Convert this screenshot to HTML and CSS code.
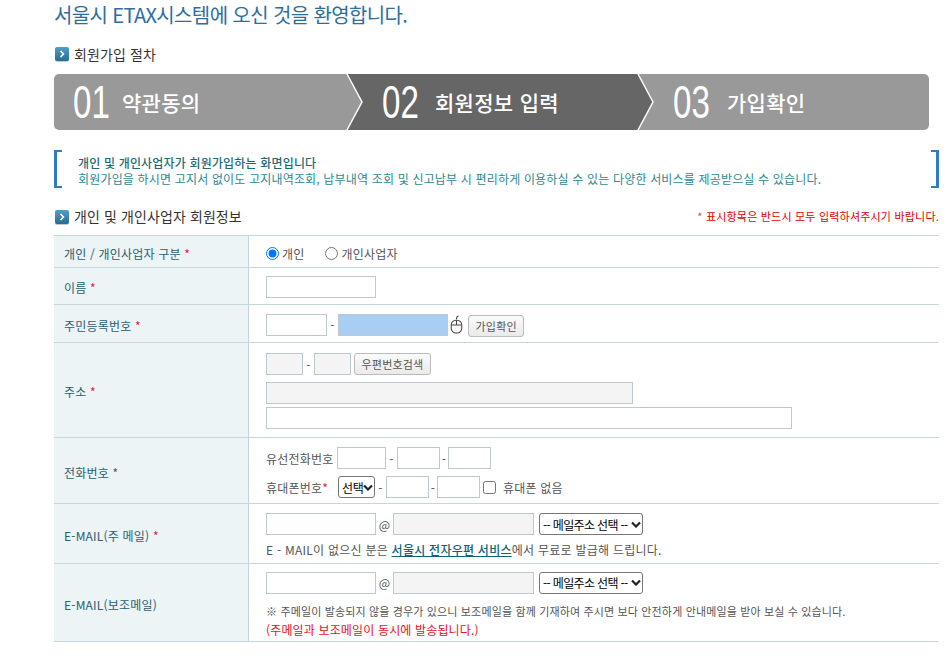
FILE: index.html
```html
<!DOCTYPE html>
<html lang="ko">
<head>
    <meta charset="UTF-8">
    <title>회원가입</title>
    <link rel="stylesheet" href="styles.css">
</head>
<body>
    <h1 class="page-title">서울시 ETAX시스템에 오신 것을 환영합니다.</h1>

    <h2 class="sub-title sub-title-steps">
        <svg class="bullet" viewBox="0 0 14 15"><defs><linearGradient id="bulletA" x1="0" y1="0" x2="0" y2="1"><stop offset="0" stop-color="#4f9fc9"/><stop offset="1" stop-color="#276c94"/></linearGradient></defs><rect y="1" width="14" height="14" rx="2" fill="#c9c9c9"/><rect width="14" height="14" rx="2" fill="url(#bulletA)"/><path d="M5.500 4 8.500 7 5.500 10" fill="none" stroke="#fff" stroke-width="1.600"/></svg>
        회원가입 절차
    </h2>
    <ol class="steps">
        <li class="step step-one">
            <span class="step-num">01</span><span class="step-name">약관동의</span>
            <svg class="chevron" viewBox="0 0 16 56"><path d="M0 0 15 28 0 56H-2V0Z" fill="#999"/><path d="M0 0 15 28 0 56" fill="none" stroke="#fff" stroke-width="1.5"/></svg>
        </li>
        <li class="step step-two">
            <span class="step-num">02</span><span class="step-name">회원정보 입력</span>
            <svg class="chevron" viewBox="0 0 16 56"><path d="M0 0 15 28 0 56H-2V0Z" fill="#666"/><path d="M0 0 15 28 0 56" fill="none" stroke="#fff" stroke-width="1.5"/></svg>
        </li>
        <li class="step step-three">
            <span class="step-num">03</span><span class="step-name">가입확인</span>
        </li>
    </ol>

    <div class="notice">
        <strong>개인 및 개인사업자가 회원가입하는 화면입니다</strong>
        <p>회원가입을 하시면 고지서 없이도 고지내역조회, 납부내역 조회 및 신고납부 시 편리하게 이용하실 수 있는 다양한 서비스를 제공받으실 수 있습니다.</p>
    </div>

    <div class="form-head">
        <h2 class="sub-title">
            <svg class="bullet" viewBox="0 0 14 15"><defs><linearGradient id="bulletB" x1="0" y1="0" x2="0" y2="1"><stop offset="0" stop-color="#4f9fc9"/><stop offset="1" stop-color="#276c94"/></linearGradient></defs><rect y="1" width="14" height="14" rx="2" fill="#c9c9c9"/><rect width="14" height="14" rx="2" fill="url(#bulletB)"/><path d="M5.500 4 8.500 7 5.500 10" fill="none" stroke="#fff" stroke-width="1.600"/></svg>
            개인 및 개인사업자 회원정보
        </h2>
        <span class="req-note"><i>*</i> 표시항목은 반드시 모두 입력하셔주시기 바랍니다.</span>
    </div>

    <table class="form-table">
        <tr class="row-type">
            <th>개인 / 개인사업자 구분 <em>*</em></th>
            <td>
                <div class="line">
                    <label class="radio"><input type="radio" name="kind" checked> 개인</label>
                    <label class="radio"><input type="radio" name="kind"> 개인사업자</label>
                </div>
            </td>
        </tr>
        <tr class="row-name">
            <th>이름 <em>*</em></th>
            <td><input class="w110" type="text"></td>
        </tr>
        <tr class="row-rrn">
            <th>주민등록번호 <em>*</em></th>
            <td>
                <div class="line">
                    <input class="w61" type="text"><span class="dash">-</span><input class="w110 filled" type="text">
                    <svg class="mouse" viewBox="0 0 12 18"><path d="M6 4C6 2 7 1 8 1" fill="none" stroke="#444"/><rect x="1" y="5" width="10" height="12" rx="4.5" fill="#fff" stroke="#444"/><path d="M1 9.500H11M6 5V9.500" fill="none" stroke="#444"/></svg>
                    <button class="btn btn-check" type="button">가입확인</button>
                </div>
            </td>
        </tr>
        <tr class="row-addr">
            <th>주소 <em>*</em></th>
            <td>
                <div class="line">
                    <input class="w37 ro" type="text"><span class="dash">-</span><input class="w37 ro" type="text">
                    <button class="btn btn-post" type="button">우편번호검색</button>
                </div>
                <input class="addr1 ro" type="text">
                <input class="addr2" type="text">
            </td>
        </tr>
        <tr class="row-tel">
            <th>전화번호 <em class="dark">*</em></th>
            <td>
                <div class="line">
                    <span class="tel-label">유선전화번호</span><input class="w49" type="text"><span class="dash">-</span><input class="w43" type="text"><span class="dash tight">-</span><input class="w43" type="text">
                </div>
                <div class="line line-mobile">
                    <span class="tel-label">휴대폰번호<em>*</em></span>
                    <select class="sel-phone"><option>선택</option></select><span class="dash">-</span><input class="w43" type="text"><span class="dash tight">-</span><input class="w43" type="text">
                    <label class="check"><input type="checkbox"> 휴대폰 없음</label>
                </div>
            </td>
        </tr>
        <tr class="row-mail">
            <th>E-MAIL(주 메일) <em>*</em></th>
            <td>
                <div class="line">
                    <input class="w110" type="text"><span class="at">@</span><input class="w141 ro" type="text">
                    <select class="sel-mail"><option>-- 메일주소 선택 --</option></select>
                </div>
                <p class="hint">E - MAIL이 없으신 분은 <a href="#">서울시 전자우편 서비스</a>에서 무료로 발급해 드립니다.</p>
            </td>
        </tr>
        <tr class="row-mail2">
            <th>E-MAIL(보조메일)</th>
            <td>
                <div class="line">
                    <input class="w110" type="text"><span class="at">@</span><input class="w141 ro" type="text">
                    <select class="sel-mail"><option>-- 메일주소 선택 --</option></select>
                </div>
                <p class="hint hint-small">※ 주메일이 발송되지 않을 경우가 있으니 보조메일을 함께 기재하여 주시면 보다 안전하게 안내메일을 받아 보실 수 있습니다.</p>
                <p class="hint hint-red">(주메일과 보조메일이 동시에 발송됩니다.)</p>
            </td>
        </tr>
    </table>
</body>
</html>
```

FILE: styles.css
```css
body {
    margin: 0;
    padding: 0 13px 0 54px;
    height: 657px;
    overflow: hidden;
    font-family: "Noto Sans CJK KR", sans-serif;
    font-size: 12px;
    color: #555;
    background: #fff;
}
.page-title {
    margin: 0;
    height: 44px;
    line-height: 29px;
    font-size: 20px;
    font-weight: 400;
    letter-spacing: -0.63px;
    color: #2d6e9e;
}
.sub-title {
    display: flex;
    align-items: center;
    gap: 5px;
    margin: 0;
    font-size: 14px;
    font-weight: 400;
    line-height: 20px;
    letter-spacing: 0.1px;
    color: #333;
}
.sub-title-steps {
    height: 30px;
    align-items: flex-start;
}
.bullet {
    width: 14px;
    height: 15px;
    margin: 3px 0 0 1px;
    flex: none;
}
.steps {
    display: flex;
    width: 875px;
    height: 56px;
    margin: 0;
    padding: 0;
    list-style: none;
    color: #fff;
}
.step {
    position: relative;
    display: flex;
    align-items: center;
    box-sizing: border-box;
    background: #999;
}
.step-one {
    width: 293px;
    padding-left: 19px;
    border-radius: 5px 0 0 5px;
}
.step-two {
    width: 291px;
    padding-left: 35px;
    background: #666;
}
.step-three {
    flex: 1;
    padding-left: 35px;
    border-radius: 0 5px 5px 0;
}
.step-num {
    width: 49px;
    font-family: "Liberation Sans", sans-serif;
    font-size: 46px;
    line-height: 56px;
    transform: scaleX(0.72);
    transform-origin: left center;
}
.step-name {
    font-size: 21px;
    font-weight: 500;
    letter-spacing: 0.3px;
}
.step-two .step-name {
    margin-left: 4px;
}
.step-three .step-name {
    margin-left: 5px;
}
.chevron {
    position: absolute;
    top: 0;
    left: 100%;
    width: 16px;
    height: 56px;
    overflow: visible;
    z-index: 1;
}
.notice {
    position: relative;
    height: 38px;
    margin-top: 20px;
    padding: 0 0 0 24px;
    line-height: 16px;
    font-size: 12px;
    letter-spacing: 0.17px;
    color: #2b8a92;
}
.notice::before,
.notice::after {
    content: "";
    position: absolute;
    top: 0;
    width: 5px;
    height: 34px;
    border: solid #2f7cc0;
}
.notice::before {
    left: 0;
    border-width: 2px 0 2px 3px;
}
.notice::after {
    right: 0;
    border-width: 2px 3px 2px 0;
}
.notice strong {
    display: block;
    padding-top: 5px;
    font-weight: 500;
    color: #1d6a73;
}
.notice p {
    margin: 0;
}
.form-head {
    display: flex;
    justify-content: space-between;
    align-items: center;
    box-sizing: border-box;
    height: 47px;
    padding-top: 9px;
}
.req-note {
    font-size: 11px;
    letter-spacing: 0.2px;
    color: #e00000;
}
.req-note i {
    font-style: normal;
    color: #c85a3a;
}
.form-table {
    width: 885px;
    border-collapse: collapse;
    border-top: 1px solid #c3d7dc;
}
.form-table th,
.form-table td {
    padding: 0;
    border-bottom: 1px solid #c3d7dc;
    vertical-align: middle;
    text-align: left;
    font-weight: 400;
}
.form-table th {
    width: 184px;
    padding: 3px 0 0 10px;
    border-right: 1px solid #c3d7dc;
    background: #ecf4f6;
    font-size: 12px;
    letter-spacing: 0.2px;
    color: #2a5f6e;
}
.form-table td {
    padding: 2px 0 0 17px;
}
.form-table .row-tel td,
.form-table .row-mail td,
.form-table .row-mail2 td {
    padding-top: 4px;
}
.form-table .row-type td {
    padding-top: 4px;
}
.form-table em {
    font-style: normal;
    color: #e8203a;
}
.form-table em.dark {
    color: #555;
}
.row-type th { height: 28px; }
.row-name th { height: 33px; }
.row-rrn th { height: 34px; }
.row-addr th { height: 91px; }
.row-tel th { height: 62px; }
.row-mail th { height: 56px; }
.row-mail2 th { height: 74px; }

.line {
    display: flex;
    align-items: center;
    letter-spacing: 0.2px;
}
input[type="text"] {
    display: block;
    box-sizing: border-box;
    height: 22px;
    margin: 0;
    padding: 0 3px;
    border: 1px solid #bccacd;
    background: #fff;
}
input.ro { background: #f4f4f4; }
input.filled { background: #a8cff3; }
.w37 { width: 37px; }
.w43 { width: 43px; }
.w49 { width: 49px; }
.w61 { width: 61px; }
.w110 { width: 110px; }
.w141 { width: 141px; }
input.addr1 { width: 367px; margin-top: 7px; }
input.addr2 { width: 526px; margin-top: 3px; }
.dash {
    width: 11px;
    text-align: center;
}
.dash.tight { width: 8px; }
.at {
    width: 17px;
    text-align: center;
    font-size: 12px;
}
.radio {
    display: flex;
    align-items: center;
    gap: 3px;
    margin-right: 21px;
}
.radio input {
    width: 13px;
    height: 13px;
    margin: 0;
}
.mouse {
    width: 13px;
    height: 19px;
    margin: 0 5px 0 2px;
}
.btn {
    height: 22px;
    padding: 0 6.5px;
    border: 1px solid #bbb;
    border-radius: 3px;
    background: linear-gradient(#fafafa, #eaeaea);
    font: inherit;
    font-size: 11px;
    letter-spacing: 0.2px;
    color: #555;
}
.btn-check {
    margin-top: 2px;
}
.btn-post {
    margin-left: 3px;
}
.tel-label {
    width: 71px;
}
.line-mobile {
    margin-top: 7px;
}
.line-mobile .tel-label {
    width: 72px;
}
select {
    box-sizing: border-box;
    height: 22px;
    padding: 0 0 0 3px;
    border: 1px solid #767676;
    border-radius: 3px;
    appearance: none;
    background: #fff url("data:image/svg+xml,%3Csvg xmlns='http://www.w3.org/2000/svg' width='10' height='7'%3E%3Cpath d='M1 1.500 5 5.500 9 1.500' fill='none' stroke='%23222' stroke-width='2.200'/%3E%3C/svg%3E") no-repeat right 1px center;
    font: inherit;
    letter-spacing: -0.35px;
    color: #000;
}
.sel-mail {
    width: 104px;
    margin-left: 5px;
    letter-spacing: -0.65px;
}
.sel-phone { width: 37px; }
.check {
    display: flex;
    align-items: center;
    gap: 7px;
    margin-left: 3px;
}
.check input {
    width: 13px;
    height: 13px;
    margin: 0;
}
.hint {
    margin: 7px 0 0;
    line-height: 16px;
    letter-spacing: 0.25px;
}
.hint a {
    color: #0f6478;
    font-weight: 500;
}
.hint-small {
    margin-top: 9px;
    font-size: 11px;
    letter-spacing: 0.15px;
}
.hint-red {
    margin-top: 3px;
    letter-spacing: 0.15px;
    color: #e8101a;
}
```
